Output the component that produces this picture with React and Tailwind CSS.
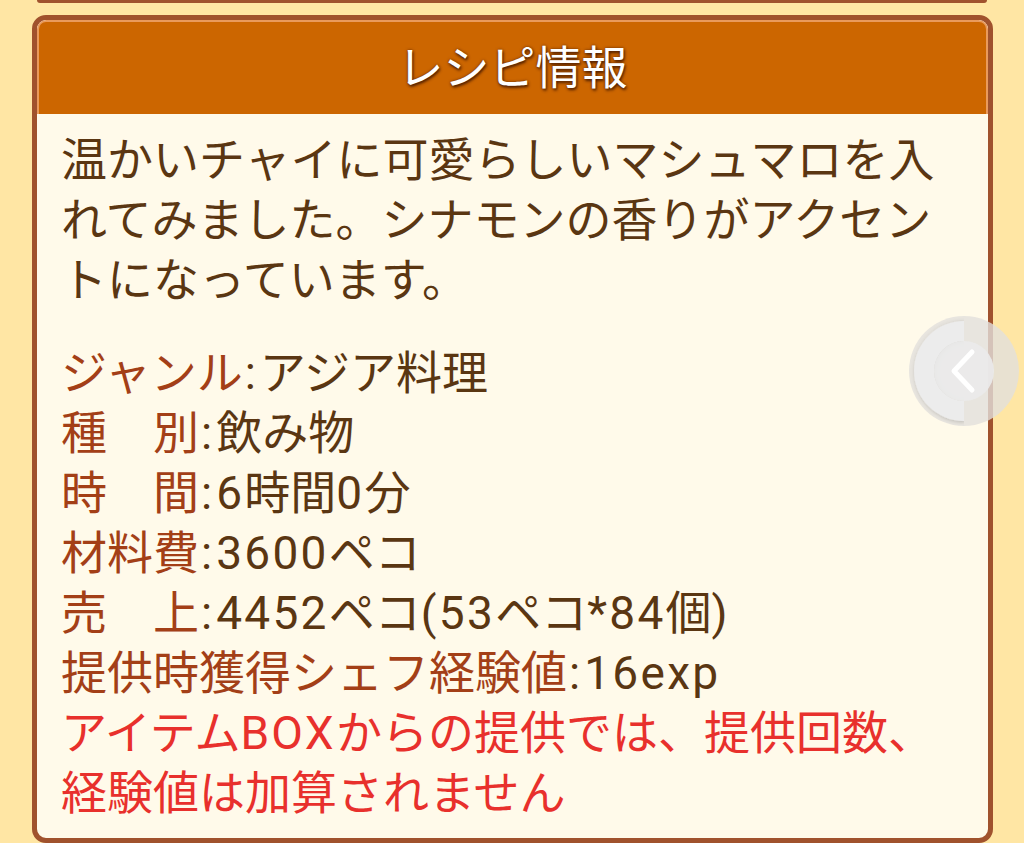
function Mixed({ text }) {
  const parts = text.match(/[\x20-\x7e]+|[^\x20-\x7e]+/g) || [];
  return (
    <>
      {parts.map((p, i) =>
        /^[\x20-\x7e]+$/.test(p) ? (
          <span key={i} className="tracking-[0.05em]">{p}</span>
        ) : (
          <span key={i}>{p}</span>
        )
      )}
    </>
  );
}

export default function App() {
  const font = { fontFamily: 'Roboto, "Noto Sans CJK JP", "Noto Sans", sans-serif' };
  const rows = [
    ["ジャンル", "アジア料理"],
    ["種　別", "飲み物"],
    ["時　間", "6時間0分"],
    ["材料費", "3600ペコ"],
    ["売　上", "4452ペコ(53ペコ*84個)"],
    ["提供時獲得シェフ経験値", "16exp"],
  ];
  return (
    <div className="relative w-[1024px] h-[843px] overflow-hidden bg-[#ffe6a4]" style={font}>
      <div className="h-[3px] mx-[37px] bg-[#a0522d] rounded-b-[4px]" />
      <div className="mt-[12px] ml-[32px] mr-[31px] border-[5px] border-[#a0522d] rounded-[14px] bg-[#fffaea] overflow-hidden">
        <div className="h-[94px] bg-[#cc6600] border-t-2 border-x-2 border-[#e99a5c] rounded-t-[9px] flex items-center justify-center">
          <span className="text-[46px] leading-none text-white [text-shadow:1px_2px_3px_rgba(70,25,0,0.9),0_0_3px_rgba(70,25,0,0.7)]">
            レシピ情報
          </span>
        </div>
        <div className="pl-[24px] pr-[20px] pt-[16px] pb-[15px] text-[46px] leading-[60px]">
          <p className="text-[#5a3612]">
            温かいチャイに可愛らしいマシュマロを入れてみました。シナモンの香りがアクセントになっています。
          </p>
          <div className="mt-[33px]">
            {rows.map(([k, v]) => (
              <div key={k} className="whitespace-nowrap">
                <span className="text-[#a33f17]">{k}</span>
                <span className="text-[#5a3612]">
                  <span className="inline-block pl-[2px] pr-[4px]">:</span>
                  <Mixed text={v} />
                </span>
              </div>
            ))}
            <p className="text-[#e8302c]">
              <Mixed text="アイテムBOXからの提供では、提供回数、経験値は加算されません" />
            </p>
          </div>
        </div>
      </div>
      <div className="absolute left-[908px] top-[315px] w-[112px] h-[112px]">
        <svg width="112" height="112" viewBox="0 0 112 112">
          <defs>
            <filter id="sh" x="-30%" y="-30%" width="160%" height="160%">
              <feDropShadow dx="1" dy="1" stdDeviation="2" floodColor="#000" floodOpacity="0.2" />
            </filter>
            <clipPath id="lh">
              <rect x="0" y="0" width="56" height="112" />
            </clipPath>
          </defs>
          <circle cx="56" cy="56" r="55" fill="rgba(226,224,220,0.8)" />
          <g clipPath="url(#lh)" filter="url(#sh)">
            <path d="M56 6 A50 50 0 0 0 56 106 L56 86 A30 30 0 0 1 56 26 Z" fill="#ececec" />
          </g>
          <circle cx="56" cy="56" r="30" fill="rgba(234,234,234,0.92)" />
          <polyline
            points="64,37 46,56 64,75"
            fill="none"
            stroke="#ffffff"
            strokeWidth="5"
            strokeLinecap="round"
            strokeLinejoin="round"
          />
        </svg>
      </div>
    </div>
  );
}
